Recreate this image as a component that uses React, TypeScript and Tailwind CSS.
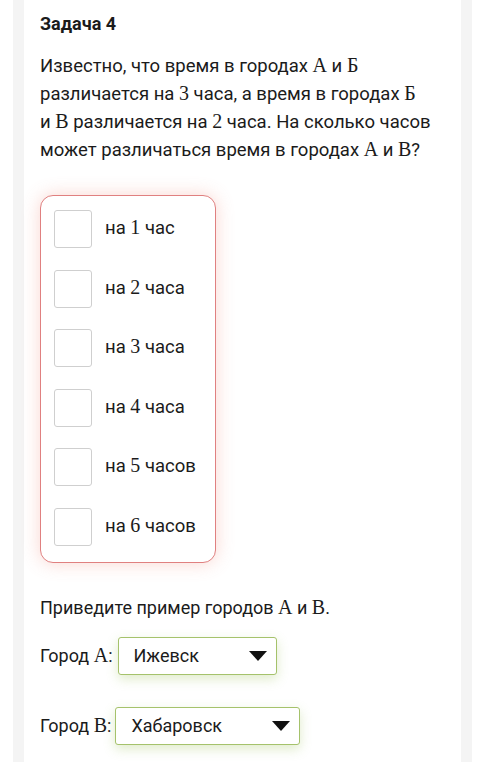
const M = ({ children }: { children: React.ReactNode }) => (
  <span className="font-['Liberation_Serif',serif] text-[20px] leading-none">{children}</span>
)

const OPTIONS: [string, string][] = [
  ['1', 'час'],
  ['2', 'часа'],
  ['3', 'часа'],
  ['4', 'часа'],
  ['5', 'часов'],
  ['6', 'часов'],
]

function Select({ value, width }: { value: string; width: string }) {
  return (
    <div
      className={`${width} h-[38px] flex items-center justify-between pl-[15px] pr-[8px] border border-[#a5c26b] rounded-[3px] bg-white shadow-[0_4px_12px_rgba(150,190,80,0.3)]`}
    >
      <span>{value}</span>
      <svg width="20" height="12" viewBox="0 0 20 12">
        <path d="M1 1 L19 1 L10 11 Z" fill="#111" />
      </svg>
    </div>
  )
}

export default function App() {
  return (
    <div className="min-h-[762px] bg-white px-[13px] font-['Roboto',sans-serif] text-[#1b1b1b]">
      <div className="min-h-[762px] border-x-[11px] border-[#f4f4f4] pl-[16px] pr-[30px]">
        <h1 className="pt-[12px] text-[18px] font-bold leading-[24px]">Задача 4</h1>
        <p className="mt-[16px] text-[18.5px] leading-[28px]">
          Известно, что время в городах <M>А</M> и <M>Б</M> различается на <M>3</M> часа, а время в городах{' '}
          <M>Б</M> и{'\u00a0'}<M>В</M> различается на <M>2</M> часа. На сколько часов может различаться время в городах{' '}
          <M>А</M> и <M>В</M>?
        </p>

        <div className="mt-[31px] w-[176px] rounded-[13px] border border-[#e08080] bg-white shadow-[0_0_18px_rgba(240,120,100,0.3)] px-[13px] pt-[14px] pb-[16px] flex flex-col gap-[21.5px]">
          {OPTIONS.map(([n, word], i) => (
            <label key={i} className="flex items-center gap-[13px] text-[18.5px]">
              <span className="w-[38px] h-[38px] rounded-[3px] border border-[#cfcfcf] bg-white shrink-0" />
              <span>
                на <M>{n}</M> {word}
              </span>
            </label>
          ))}
        </div>

        <p className="mt-[31px] text-[18px] leading-[28px]">
          Приведите пример городов <M>А</M> и <M>В</M>.
        </p>

        <div className="mt-[15px] flex items-center gap-[5px] text-[18px]">
          <span>
            Город <M>А</M>:
          </span>
          <Select value="Ижевск" width="w-[159px]" />
        </div>

        <div className="mt-[32px] flex items-center gap-[4px] text-[18px]">
          <span>
            Город <M>В</M>:
          </span>
          <Select value="Хабаровск" width="w-[185px]" />
        </div>
      </div>
    </div>
  )
}
